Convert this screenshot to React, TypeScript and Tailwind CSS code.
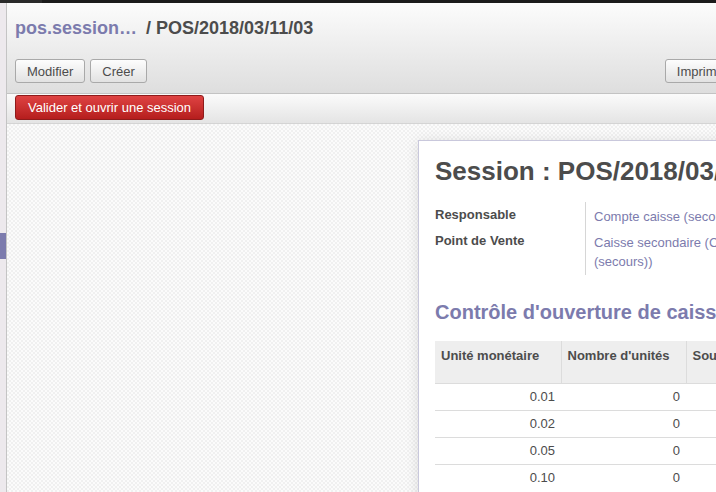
const rows = ["0.01", "0.02", "0.05", "0.10"];

function Btn({ children }: { children: React.ReactNode }) {
  return (
    <button className="h-[24px] px-[11px] text-[13px] text-[#4c4c4c] rounded-[3px] border border-[#a9a9a9] bg-gradient-to-b from-[#fdfdfd] to-[#e2e2e2] leading-none whitespace-nowrap">
      {children}
    </button>
  );
}

export default function App() {
  return (
    <div className="w-[716px] h-[492px] overflow-hidden flex flex-col bg-white font-['Liberation_Sans',Arial,sans-serif] text-[13px] text-[#4c4c4c]">
      <div className="h-[3px] flex shrink-0">
        <div className="w-[42px] bg-[#2b2b2b]" />
        <div className="flex-1 bg-[#1c1c1c]" />
      </div>
      <div className="flex flex-1 min-h-0">
        {/* left menu edge */}
        <div className="w-[7px] shrink-0 bg-[#ede9ed] border-r border-[#c4c4c4] flex flex-col">
          <div className="h-[230px]" />
          <div className="h-[26px] bg-[#7c7bad]" />
        </div>

        <div className="flex-1 min-w-0 flex flex-col overflow-hidden">
          {/* control panel */}
          <div className="h-[91px] shrink-0 bg-gradient-to-b from-[#fcfcfc] to-[#dedede] border-b border-[#c3c3c3] px-[8px] flex flex-col">
            <div className="h-[50px] flex items-center pt-[1px] text-[18px] font-bold whitespace-nowrap">
              <span className="text-[#7c7bad]">pos.session…</span>
              <span className="ml-[9px] text-[#4c4c4c]">/ POS/2018/03/11/03</span>
            </div>
            <div className="flex items-center pt-[6px]">
              <div className="flex gap-[5px] shrink-0">
                <Btn>Modifier</Btn>
                <Btn>Créer</Btn>
              </div>
              <div className="ml-[518px] shrink-0">
                <Btn>Imprimer</Btn>
              </div>
            </div>
          </div>

          {/* status bar */}
          <div className="h-[30px] shrink-0 bg-gradient-to-b from-[#fbfbfb] to-[#e4e4e4] border-b border-[#d4d4d4] px-[8px] flex items-start pt-[1px]">
            <button className="h-[25px] px-[12px] text-[13px] text-white rounded-[3px] border border-[#8e1b1b] bg-gradient-to-b from-[#df4242] to-[#b51d1d] leading-none">
              Valider et ouvrir une session
            </button>
          </div>

          {/* sheet background */}
          <div className="flex-1 min-h-0 overflow-hidden bg-[repeating-conic-gradient(#f0f0f0_0%_25%,#fbfbfb_0%_50%)] bg-size-[4px_4px] pl-[411px] pt-[16px]">
            <div className="w-[700px] bg-white border border-[#c9c8dc] shadow-[0_2px_12px_rgba(0,0,0,0.12)] pl-[16px] pt-[14px] pb-[40px]">
              <h1 className="text-[26px] font-bold leading-[32px] whitespace-nowrap text-[#4c4c4c]">
                Session : POS/2018/03/11/03
              </h1>

              <div className="mt-[15px] flex">
                <div className="w-[150px] shrink-0 flex flex-col font-bold">
                  <div className="h-[26px] leading-[26px]">Responsable</div>
                  <div className="h-[26px] leading-[26px]">Point de Vente</div>
                </div>
                <div className="border-l border-[#d6d6d6] pl-[8px] pb-[4px] text-[#7c7bad] flex flex-col">
                  <div className="h-[26px] leading-[26px] mt-[2px] whitespace-nowrap">Compte caisse (secours)</div>
                  <div className="leading-[19px] mt-[3px] w-[180px]">
                    Caisse secondaire (Caisse (secours))
                  </div>
                </div>
              </div>

              <h2 className="mt-[25px] text-[20px] font-bold leading-[24px] text-[#7c7bad] whitespace-nowrap">
                Contrôle d'ouverture de caisse
              </h2>

              <table className="mt-[17px] border-collapse text-[13px]">
                <thead>
                  <tr className="bg-[#eeeeee] h-[42px]">
                    <th className="w-[126px] text-left font-bold align-top pt-[5px] px-[6px] border-r border-[#dcdcdc] whitespace-nowrap">
                      Unité monétaire
                    </th>
                    <th className="w-[125px] text-left font-bold align-top pt-[5px] px-[6px] border-r border-[#dcdcdc] whitespace-nowrap">
                      Nombre d'unités
                    </th>
                    <th className="w-[200px] text-left font-bold align-top pt-[5px] px-[6px]">
                      Sous-total
                    </th>
                  </tr>
                </thead>
                <tbody>
                  {rows.map((r) => (
                    <tr key={r} className="h-[27px] border-t border-[#dcdcdc]">
                      <td className="text-right pr-[6px]">{r}</td>
                      <td className="text-right pr-[6px]">0</td>
                      <td className="text-right pr-[6px]">0.00</td>
                    </tr>
                  ))}
                </tbody>
              </table>
            </div>
          </div>
        </div>
      </div>
    </div>
  );
}
